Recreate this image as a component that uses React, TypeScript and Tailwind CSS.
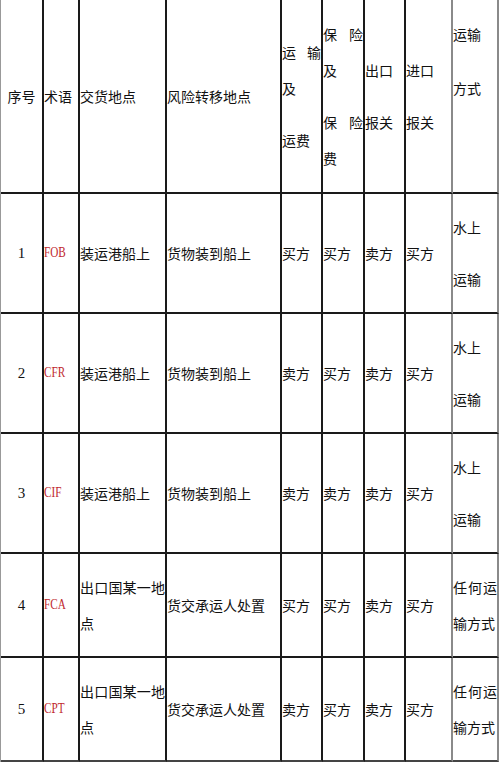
import type { ReactNode } from "react";

const cjk = "font-['Noto_Sans_CJK_SC',sans-serif]";

type Row = {
  no: string;
  code: string;
  place: ReactNode;
  risk: string;
  freight: string;
  insurance: string;
  exportClear: string;
  importClear: string;
  mode: ReactNode;
};

// one 36px text line
const Line = ({ children, spread = false, gap = false }: { children: ReactNode; spread?: boolean; gap?: boolean }) => (
  <div className={`h-9 leading-9 whitespace-nowrap ${spread ? "flex justify-between" : ""} ${gap ? "mt-4" : ""}`}>
    {children}
  </div>
);

const Spread = ({ text }: { text: string }) => (
  <>
    {text.split("").map((c, i) => (
      <span key={i}>{c}</span>
    ))}
  </>
);

const Cell = ({
  children,
  right = "border-r-[#1a1a1a]",
  last = false,
  top = false,
  center = false,
}: {
  children?: ReactNode;
  right?: string;
  last?: boolean;
  top?: boolean;
  center?: boolean;
}) => (
  <div
    className={`flex flex-col border-r-2 border-b-2 ${right} ${last ? "border-b-[#444]" : "border-b-[#1a1a1a]"} ${
      top ? "justify-start" : "justify-center"
    } ${center ? "items-center" : ""} overflow-visible`}
  >
    {children}
  </div>
);

const waterMode = (
  <>
    <Line>水上</Line>
    <Line gap>运输</Line>
  </>
);

const anyMode = (
  <>
    <Line spread>
      <Spread text="任何运" />
    </Line>
    <Line>输方式</Line>
  </>
);

const shipPlace = <Line>装运港船上</Line>;
const countryPlace = (
  <>
    <Line spread>
      <Spread text="出口国某一地" />
    </Line>
    <Line>点</Line>
  </>
);

const rows: Row[] = [
  { no: "1", code: "FOB", place: shipPlace, risk: "货物装到船上", freight: "买方", insurance: "买方", exportClear: "卖方", importClear: "买方", mode: waterMode },
  { no: "2", code: "CFR", place: shipPlace, risk: "货物装到船上", freight: "卖方", insurance: "买方", exportClear: "卖方", importClear: "买方", mode: waterMode },
  { no: "3", code: "CIF", place: shipPlace, risk: "货物装到船上", freight: "卖方", insurance: "卖方", exportClear: "卖方", importClear: "买方", mode: waterMode },
  { no: "4", code: "FCA", place: countryPlace, risk: "货交承运人处置", freight: "买方", insurance: "买方", exportClear: "卖方", importClear: "买方", mode: anyMode },
  { no: "5", code: "CPT", place: countryPlace, risk: "货交承运人处置", freight: "卖方", insurance: "买方", exportClear: "卖方", importClear: "买方", mode: anyMode },
];

export default function App() {
  return (
    <div className={`w-[500px] h-[763px] bg-white text-[14px] text-[#111] ${cjk}`}>
      <div className="grid w-[499px] grid-cols-[43px_36px_87px_115px_41px_42px_41px_47px_46px] grid-rows-[194px_120px_120px_120px_104px_104px] border-l border-l-[#999]">
        {/* header */}
        <Cell center>
          <Line>序号</Line>
        </Cell>
        <Cell>
          <Line>术语</Line>
        </Cell>
        <Cell>
          <Line>交货地点</Line>
        </Cell>
        <Cell>
          <Line>风险转移地点</Line>
        </Cell>
        <Cell>
          <Line spread>
            <Spread text="运输" />
          </Line>
          <Line>及</Line>
          <Line gap>运费</Line>
        </Cell>
        <Cell>
          <Line spread>
            <Spread text="保险" />
          </Line>
          <Line>及</Line>
          <Line spread gap>
            <Spread text="保险" />
          </Line>
          <Line>费</Line>
        </Cell>
        <Cell>
          <Line>出口</Line>
          <Line gap>报关</Line>
        </Cell>
        <Cell right="border-r-[#8a8a8a]">
          <Line>进口</Line>
          <Line gap>报关</Line>
        </Cell>
        <Cell right="border-r-[#8a8a8a]" top>
          <div className="pt-4">
            <Line>运输</Line>
            <div className="mt-[18px]">
              <Line>方式</Line>
            </div>
          </div>
        </Cell>

        {/* body */}
        {rows.map((r, i) => {
          const last = i === rows.length - 1;
          return [
            <Cell key={`${r.no}-no`} center last={last}>
              <span className="font-['Liberation_Serif',serif] text-[15px] leading-9">{r.no}</span>
            </Cell>,
            <Cell key={`${r.no}-code`} last={last}>
              <span className="inline-block self-start origin-left scale-x-[0.8] font-['Liberation_Serif',serif] text-[14px] leading-9 text-[#c0282d]">
                {r.code}
              </span>
            </Cell>,
            <Cell key={`${r.no}-place`} last={last}>
              {r.place}
            </Cell>,
            <Cell key={`${r.no}-risk`} last={last}>
              <Line>{r.risk}</Line>
            </Cell>,
            <Cell key={`${r.no}-freight`} last={last}>
              <Line>{r.freight}</Line>
            </Cell>,
            <Cell key={`${r.no}-ins`} last={last}>
              <Line>{r.insurance}</Line>
            </Cell>,
            <Cell key={`${r.no}-exp`} last={last}>
              <Line>{r.exportClear}</Line>
            </Cell>,
            <Cell key={`${r.no}-imp`} right="border-r-[#8a8a8a]" last={last}>
              <Line>{r.importClear}</Line>
            </Cell>,
            <Cell key={`${r.no}-mode`} right="border-r-[#8a8a8a]" last={last}>
              {r.mode}
            </Cell>,
          ];
        })}
      </div>
    </div>
  );
}
